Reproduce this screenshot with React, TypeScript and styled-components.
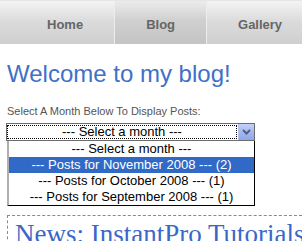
import React from "react";
import styled, { createGlobalStyle } from "styled-components";

const Global = createGlobalStyle`
  html, body { margin: 0; padding: 0; background: #fff; overflow: hidden; }
  body { font-family: "Liberation Sans", Arial, sans-serif; }
`;

const Nav = styled.nav`
  height: 43px;
  border-top: 1px solid #e6e6e6;
  border-bottom: 1px solid #fff;
  background: linear-gradient(#f4f4f4 0%, #dcdcdc 45%, #cfcfcf 100%);
  display: flex;
  padding-left: 16px;
  overflow: hidden;
  white-space: nowrap;
`;

const Tab = styled.a<{ $active?: boolean; $sep?: boolean }>`
  flex: none;
  display: flex;
  align-items: center;
  padding: 3px 31px 0;
  font-weight: bold;
  font-size: 13px;
  color: #666;
  text-decoration: none;
  border-left: ${(p) => (p.$sep ? "1px solid #ececec" : "none")};
  background: ${(p) =>
    p.$active ? "linear-gradient(#ececec 0%, #d0d0d0 45%, #c4c4c4 100%)" : "transparent"};
`;

const Main = styled.main`
  padding: 0 0 0 7px;
`;

const Heading = styled.h1`
  margin: 15px 0 0;
  font-weight: normal;
  font-size: 24px;
  color: #4070c8;
  line-height: 28px;
`;

const Label = styled.div`
  margin-top: 17px;
  font-size: 11px;
  color: #555;
  line-height: 13px;
`;

const SelectWrap = styled.div`
  position: relative;
  margin-top: 5px;
  margin-left: -1px;
  width: 249px;
`;

const SelectBox = styled.div`
  box-sizing: border-box;
  height: 18px;
  border: 1px solid #6d6d6d;
  display: flex;
  align-items: stretch;
  background: #fff;
`;

const SelectText = styled.div`
  flex: 1;
  margin: 1px 1px 1px 0;
  border: 1px dotted #000;
  display: flex;
  align-items: center;
  justify-content: center;
  font-size: 13px;
  color: #000;
  line-height: 14px;
`;

const ArrowBtn = styled.div`
  width: 15px;
  background: linear-gradient(#c4d2f8, #a5b8f0 50%, #8ea6ec);
  border-left: 1px solid #b6c5ef;
  display: flex;
  align-items: center;
  justify-content: center;
`;

const List = styled.ul`
  position: absolute;
  top: 18px;
  left: 1px;
  right: 0;
  margin: 0;
  padding: 0;
  list-style: none;
  background: #fff;
  border: 1px solid #000;
  border-left: 2px solid #b0b0b0;
  border-top: none;
  z-index: 2;
`;

const Option = styled.li<{ $selected?: boolean }>`
  height: 16px;
  line-height: 16px;
  text-align: center;
  font-size: 13px;
  color: ${(p) => (p.$selected ? "#fff" : "#000")};
  background: ${(p) => (p.$selected ? "#3169c6" : "transparent")};
`;

const Post = styled.section`
  margin-top: 74px;
  border: 1px dashed #8a8a8a;
  border-right: none;
  padding: 3px 0 0 7px;
  white-space: nowrap;
`;

const PostTitle = styled.h2`
  margin: 0;
  font-family: "Liberation Serif", "Times New Roman", serif;
  font-weight: normal;
  font-size: 27px;
  line-height: 30px;
  color: #3a68c8;
`;

export default function App() {
  return (
    <>
      <Global />
      <Nav>
        <Tab href="#">Home</Tab>
        <Tab href="#" $active $sep>Blog</Tab>
        <Tab href="#" $sep>Gallery</Tab>
      </Nav>
      <Main>
        <Heading>Welcome to my blog!</Heading>
        <Label>Select A Month Below To Display Posts:</Label>
        <SelectWrap>
          <SelectBox>
            <SelectText>--- Select a month ---</SelectText>
            <ArrowBtn>
              <svg width="9" height="6" viewBox="0 0 9 6">
                <path d="M1 1 L4.5 4.5 L8 1" fill="none" stroke="#4d6185" strokeWidth="2" />
              </svg>
            </ArrowBtn>
          </SelectBox>
          <List>
            <Option>--- Select a month ---</Option>
            <Option $selected>--- Posts for November 2008 --- (2)</Option>
            <Option>--- Posts for October 2008 --- (1)</Option>
            <Option>--- Posts for September 2008 --- (1)</Option>
          </List>
        </SelectWrap>
        <Post>
          <PostTitle>News: InstantPro Tutorials</PostTitle>
        </Post>
      </Main>
    </>
  );
}
